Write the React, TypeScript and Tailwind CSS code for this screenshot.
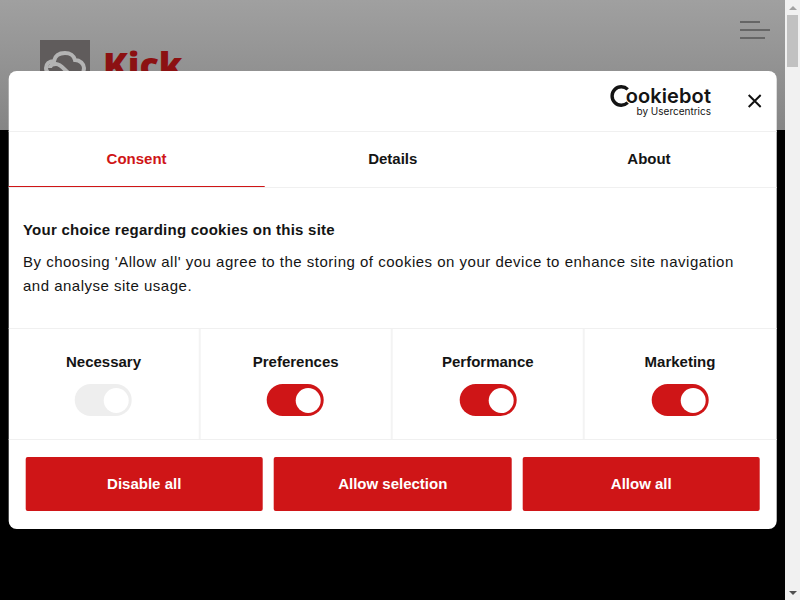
import React from 'react';

const categories = [
  { name: 'Necessary', locked: true },
  { name: 'Preferences', locked: false },
  { name: 'Performance', locked: false },
  { name: 'Marketing', locked: false },
];

function Toggle({ locked }: { locked: boolean }) {
  return (
    <div
      className={`w-[57px] h-[32px] rounded-full flex items-center justify-end pr-[3px] ${
        locked ? 'bg-[#eeeeee]' : 'bg-[#cf1517]'
      }`}
    >
      <span className="w-[25px] h-[25px] rounded-full bg-white" />
    </div>
  );
}

function Tab({ label, active }: { label: string; active?: boolean }) {
  return (
    <div
      className={`flex-1 h-[55px] flex items-center justify-center text-[15px] font-bold border-b ${
        active ? 'text-[#cf1517] border-b-[#cf1517]' : 'text-[#141414] border-b-transparent'
      }`}
    >
      <span className="mt-[1px]">{label}</span>
    </div>
  );
}

export default function App() {
  return (
    <div className="relative w-[800px] h-[600px] overflow-hidden flex bg-black font-['Liberation_Sans',Arial,sans-serif]">
      {/* PAGE BEHIND THE DIALOG */}
      <div className="flex-1">
        <header className="h-[130px] bg-gradient-to-b from-[#a0a0a0] to-[#858585] flex justify-between pl-[40px] pr-[15px]">
          <div className="flex items-start gap-[13px] pt-[40px]">
            <div className="w-[50px] h-[50px] bg-[#605c5c] flex items-start justify-center pt-[11px]">
              <svg width="42" height="28" viewBox="0 0 42 28" fill="none" stroke="#b4b4b4" strokeWidth="4">
                <path d="M12 25C6 25 2 21 2 17C2 13 5 10 10 10C11 5 15 2 21 2C26 2 30 5 31 9C36 9 40 13 40 17C40 22 36 25 31 25C23 25 19 13 12 13C8 13 6 15 6 17" />
              </svg>
            </div>
            <span className="font-['Open_Sans',sans-serif] font-extrabold text-[36px] leading-[50px] text-[#8c1112]">
              Kick
            </span>
          </div>
          <div className="flex flex-col items-start gap-[6px] pt-[21px]">
            <span className="w-[20px] h-[2px] bg-[#666666]" />
            <span className="w-[30px] h-[2px] bg-[#666666]" />
            <span className="w-[25px] h-[2px] bg-[#666666]" />
          </div>
        </header>
      </div>

      {/* SCROLLBAR */}
      <div className="w-[15px] bg-[#f1f1f1] flex flex-col items-center justify-between">
        <div className="w-full flex flex-col">
          <div className="h-[15px] flex items-center justify-center">
            <span className="border-x-[4px] border-x-transparent border-b-[4px] border-b-[#a3a3a3]" />
          </div>
          <div className="h-[52px] bg-[#c1c1c1] mx-[2px]" />
        </div>
        <div className="h-[15px] flex items-center justify-center">
          <span className="border-x-[4px] border-x-transparent border-t-[4px] border-t-[#505050]" />
        </div>
      </div>

      {/* COOKIE DIALOG */}
      <div className="absolute left-[392.75px] -translate-x-1/2 top-[71px] w-[768.6px] h-[458px] bg-white rounded-[8px] flex flex-col text-[#141414]">
        <div className="h-[61px] border-b border-[#f0f0f0] flex items-center justify-end">
          <div className="flex flex-col items-end mr-[37px] -mt-[2px] pt-[2px]">
            <div className="flex items-center h-[20px]">
              <svg width="21" height="22" viewBox="0 0 21 22" fill="none" stroke="#141414" strokeWidth="3.4" className="mr-[-5px]">
                <path d="M18 4.4A9.2 9.2 0 1 0 18 17.6" />
              </svg>
              <span className="font-['Inter',sans-serif] font-semibold text-[20px] leading-[20px] tracking-[0.1px]">ookiebot</span>
            </div>
            <span className="font-['Inter',sans-serif] text-[10px] leading-[11px]">by Usercentrics</span>
          </div>
          <svg width="14" height="14" viewBox="0 0 14 14" stroke="#141414" strokeWidth="2" className="mr-[15px]">
            <path d="M1 1L13 13M13 1L1 13" />
          </svg>
        </div>

        <div className="flex border-b border-[#f0f0f0]">
          <Tab label="Consent" active />
          <Tab label="Details" />
          <Tab label="About" />
        </div>

        <div className="h-[141px] px-[14.5px] pt-[32px] border-b border-[#f0f0f0]">
          <h2 className="text-[15px] leading-[20px] font-bold tracking-[0.25px]">Your choice regarding cookies on this site</h2>
          <p className="mt-[10px] text-[15px] leading-[24px] tracking-[0.5px]">
            By choosing 'Allow all' you agree to the storing of cookies on your device to enhance site navigation and analyse site usage.
          </p>
        </div>

        <div className="h-[111px] flex border-b border-[#f0f0f0]">
          {categories.map((c, i) => (
            <div
              key={c.name}
              className={`flex-1 flex flex-col items-center pt-[23px] border-r-2 ${i < 3 ? 'border-r-[#f3f3f3]' : 'border-r-transparent'}`}
            >
              <span className="text-[15px] leading-[20px] font-bold mb-[12px]">{c.name}</span>
              <Toggle locked={c.locked} />
            </div>
          ))}
        </div>

        <div className="flex gap-[11px] px-[17px] pt-[17px]">
          {['Disable all', 'Allow selection', 'Allow all'].map((label) => (
            <div
              key={label}
              className="flex-1 h-[54px] rounded-[2px] bg-[#cf1517] text-white text-[15px] font-bold flex items-center justify-center"
            >
              {label}
            </div>
          ))}
        </div>
      </div>
    </div>
  );
}
